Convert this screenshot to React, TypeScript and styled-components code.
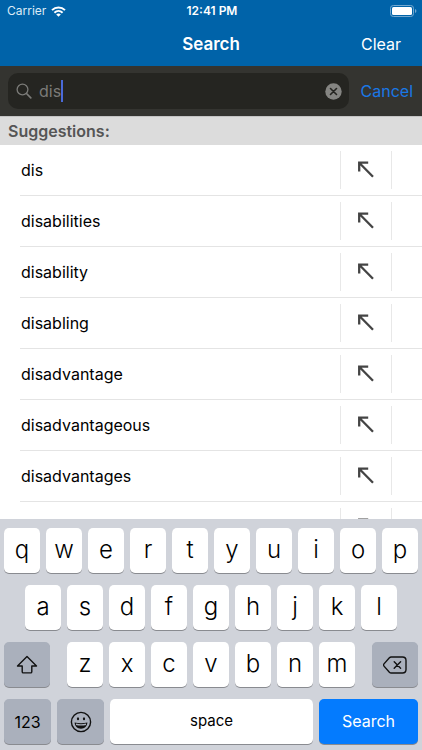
import React, { useState } from "react";
import styled, { createGlobalStyle } from "styled-components";

const GlobalStyle = createGlobalStyle`
  *, *::before, *::after { box-sizing: border-box; }
  body { margin: 0; background: #fff; }
  body, button, input { font-family: Inter, "Liberation Sans", sans-serif; }
  button { margin: 0; padding: 0; border: 0; background: none; color: inherit; cursor: pointer; }
  h1, h2, ul { margin: 0; padding: 0; }
`;

const Screen = styled.div`
  display: flex;
  flex-direction: column;
  height: 100vh;
  overflow: hidden;
  background: #fff;
`;

const StatusBar = styled.div`
  display: grid;
  grid-template-columns: 1fr auto 1fr;
  align-items: center;
  flex: none;
  height: 22px;
  padding: 0 5px 0 7px;
  background: #0063a9;
  color: #fff;
  font-size: 12px;
  line-height: 22px;
`;

const Carrier = styled.span`
  display: flex;
  align-items: center;
  gap: 5px;
  color: #dcebf6;
`;

const Clock = styled.span`
  font-weight: 600;
`;

const BatterySlot = styled.span`
  display: flex;
  justify-content: flex-end;
`;

const NavBar = styled.header`
  display: grid;
  grid-template-columns: 1fr auto 1fr;
  align-items: center;
  flex: none;
  height: 44px;
  padding: 0 21px;
  background: #0063a9;
  color: #fff;
`;

const Title = styled.h1`
  grid-column: 2;
  font-size: 17px;
  font-weight: 600;
  line-height: 22px;
`;

const NavButton = styled.button`
  justify-self: end;
  font-size: 16px;
  line-height: 22px;
`;

const SearchBar = styled.form`
  display: flex;
  align-items: center;
  gap: 12px;
  flex: none;
  height: 50px;
  padding: 0 9px 0 8px;
  background: #343430;
`;

const SearchField = styled.label`
  display: flex;
  align-items: center;
  flex: 1;
  min-width: 0;
  height: 36px;
  padding: 0 7px 0 8px;
  border-radius: 10px;
  background: #252521;
`;

const Query = styled.span`
  display: flex;
  align-items: center;
  flex: 1;
  min-width: 0;
  margin-left: 7px;
`;

const QueryInput = styled.input`
  field-sizing: content;
  min-width: 1px;
  max-width: 100%;
  padding: 0;
  border: 0;
  outline: 0;
  background: transparent;
  color: #7b7b78;
  font-size: 16px;
  line-height: 22px;
`;

const Caret = styled.span`
  width: 2px;
  height: 22px;
  background: #4a6ad8;
`;

const ClearQuery = styled.button`
  display: flex;
`;

const CancelButton = styled.button`
  color: #1a78e6;
  font-size: 16px;
  line-height: 22px;
`;

const SectionTitle = styled.h2`
  flex: none;
  height: 29px;
  padding: 0 8px;
  border-top: 1px solid #c4c4c4;
  background: #dcdcdc;
  color: #555;
  font-size: 16px;
  font-weight: 600;
  line-height: 28px;
`;

const SuggestionList = styled.ul`
  flex: 1;
  min-height: 0;
  overflow: hidden;
  list-style: none;
`;

const SuggestionRow = styled.li`
  display: flex;
  align-items: center;
  height: 51px;
  margin-left: 20px;
  border-bottom: 1px solid #e4e4e4;
`;

const SuggestionText = styled.button`
  flex: 1;
  height: 100%;
  padding-left: 1px;
  color: #000;
  font-size: 16px;
  line-height: 22px;
  text-align: left;
`;

const FillButton = styled.button`
  display: flex;
  align-items: center;
  justify-content: center;
  width: 52px;
  height: 38px;
  margin-right: 30px;
  padding-bottom: 1px;
  border: solid #e8e8e8;
  border-width: 0 1px;
`;

const Keyboard = styled.div`
  display: flex;
  flex-direction: column;
  flex: none;
  gap: 12px;
  padding: 9px 4px 6px;
  background: #d0d3da;
`;

const KeyRow = styled.div<{ $columns: string; $gap?: number; $inset?: number }>`
  display: grid;
  grid-template-columns: ${(p) => p.$columns};
  gap: ${(p) => p.$gap ?? 6}px;
  padding: 0 ${(p) => p.$inset ?? 0}px;
`;

type Tone = "letter" | "system" | "action" | "space";

const keyColors: Record<Tone, string> = {
  letter: "#fff",
  space: "#fff",
  system: "#aab0bc",
  action: "#047bfe",
};

const Key = styled.button<{ $tone?: Tone }>`
  display: flex;
  align-items: center;
  justify-content: center;
  min-width: 0;
  height: 45px;
  padding-bottom: ${(p) => (p.$tone === "system" ? 0 : 2)}px;
  border-radius: 5px;
  background: ${(p) => keyColors[p.$tone ?? "letter"]};
  box-shadow: 0 1px 0 #898b90;
  color: ${(p) => (p.$tone === "action" ? "#fff" : "#000")};
  font-size: ${(p) => (p.$tone ? (p.$tone === "space" ? 15 : 16) : 24)}px;
  font-weight: ${(p) => (p.$tone ? 400 : 300)};
  line-height: 28px;
`;

const WifiIcon = () => (
  <svg width="15" height="11" viewBox="0 0 15 11" fill="none" stroke="#fff" strokeWidth="2" aria-hidden="true">
    <path d="M1 4.1C4.7.5 10.3.5 14 4.1" />
    <path d="M3.4 6.7c2.4-2.2 5.8-2.2 8.2 0" />
    <path d="M7.5 10.7 5.2 8.4c1.3-1.2 3.3-1.2 4.6 0Z" fill="#fff" stroke="none" />
  </svg>
);

const BatteryIcon = () => (
  <svg width="27" height="12" viewBox="0 0 27 12" fill="none" aria-label="Battery full">
    <rect x="0.5" y="0.5" width="23" height="11" rx="2.8" stroke="#73a8d0" />
    <rect x="2" y="2" width="20" height="8" rx="1.5" fill="#fff" />
    <path d="M25 4v4c1.9-.7 1.9-3.3 0-4Z" fill="#73a8d0" />
  </svg>
);

const MagnifierIcon = () => (
  <svg width="16" height="16" viewBox="0 0 16 16" fill="none" stroke="#7b7b78" strokeWidth="1.3" strokeLinecap="round" aria-hidden="true">
    <circle cx="6.5" cy="6.5" r="5.4" />
    <path d="m10.5 10.5 4.3 4.3" strokeWidth="1.7" />
  </svg>
);

const ClearIcon = () => (
  <svg width="17" height="17" viewBox="0 0 17 17" aria-hidden="true">
    <circle cx="8.5" cy="8.5" r="8.2" fill="#858582" />
    <path d="m5.5 5.5 6 6m0-6-6 6" stroke="#252521" strokeWidth="1.6" strokeLinecap="round" />
  </svg>
);

const ArrowIcon = () => (
  <svg width="16" height="17" viewBox="0 0 16 17" fill="none" stroke="#444" strokeWidth="2.3" aria-hidden="true">
    <path d="M1.200 10.500V1.700h9M1.700 2.200l13.300 13.600" />
  </svg>
);

const ShiftIcon = () => (
  <svg width="22" height="20" viewBox="0 0 22 20" fill="none" stroke="#111" strokeWidth="1.4" strokeLinejoin="round" aria-hidden="true">
    <path d="M11 1.6 1.5 11h4.7v5.7c0 .8.4 1.2 1.2 1.2h7.2c.8 0 1.2-.4 1.2-1.2V11h4.7Z" />
  </svg>
);

const BackspaceIcon = () => (
  <svg width="24" height="18" viewBox="0 0 24 18" fill="none" stroke="#111" strokeWidth="1.4" strokeLinejoin="round" strokeLinecap="round" aria-hidden="true">
    <path d="M8.2 1h11.3C21.8 1 23 2.2 23 4.5v9c0 2.3-1.2 3.5-3.5 3.5H8.2c-.8 0-1.3-.3-1.8-.8L1 10.1c-.7-.8-.7-1.4 0-2.2l5.4-6.1C6.9 1.3 7.4 1 8.2 1Z" />
    <path d="m11.2 5.8 6.4 6.4m0-6.4-6.4 6.4" />
  </svg>
);

const SmileIcon = () => (
  <svg width="22" height="22" viewBox="0 0 22 22" fill="none" stroke="#111" aria-hidden="true">
    <circle cx="11" cy="11" r="9.6" strokeWidth="1.4" />
    <ellipse cx="8" cy="7.8" rx="1.1" ry="1.5" fill="#111" stroke="none" />
    <ellipse cx="14" cy="7.8" rx="1.1" ry="1.5" fill="#111" stroke="none" />
    <path d="M4.6 11.6c4.2 1 8.6 1 12.8 0-.1 3.7-2.9 6.2-6.4 6.2s-6.3-2.5-6.4-6.2Z" fill="#111" stroke="none" />
    <path d="M6 13.3c3.2.7 6.8.7 10 0" stroke="#aab0bc" strokeWidth="1.4" />
  </svg>
);

const suggestions = [
  "dis",
  "disabilities",
  "disability",
  "disabling",
  "disadvantage",
  "disadvantageous",
  "disadvantages",
  "",
];

export default function App() {
  const [query, setQuery] = useState("dis");
  const type = (letter: string) => setQuery(query + letter);
  const letters = (row: string) =>
    row.split("").map((letter) => (
      <Key key={letter} type="button" onClick={() => type(letter)}>
        {letter}
      </Key>
    ));

  return (
    <Screen>
      <GlobalStyle />
      <StatusBar>
        <Carrier>
          Carrier <WifiIcon />
        </Carrier>
        <Clock>12:41 PM</Clock>
        <BatterySlot>
          <BatteryIcon />
        </BatterySlot>
      </StatusBar>
      <NavBar>
        <Title>Search</Title>
        <NavButton type="button">Clear</NavButton>
      </NavBar>
      <SearchBar onSubmit={(e) => e.preventDefault()}>
        <SearchField>
          <MagnifierIcon />
          <Query>
            <QueryInput aria-label="Search" value={query} onChange={(e) => setQuery(e.target.value)} />
            <Caret />
          </Query>
          <ClearQuery type="button" aria-label="Clear text" onClick={() => setQuery("")}>
            <ClearIcon />
          </ClearQuery>
        </SearchField>
        <CancelButton type="button">Cancel</CancelButton>
      </SearchBar>
      <SectionTitle>Suggestions:</SectionTitle>
      <SuggestionList>
        {suggestions.map((word) => (
          <SuggestionRow key={word}>
            <SuggestionText type="button">{word}</SuggestionText>
            <FillButton type="button" aria-label={`Use ${word}`} onClick={() => setQuery(word)}>
              <ArrowIcon />
            </FillButton>
          </SuggestionRow>
        ))}
      </SuggestionList>
      <Keyboard>
        <KeyRow $columns="repeat(10, 1fr)">{letters("qwertyuiop")}</KeyRow>
        <KeyRow $columns="repeat(9, 1fr)" $inset={21}>
          {letters("asdfghjkl")}
        </KeyRow>
        <KeyRow $columns="46fr 288fr 46fr" $gap={17}>
          <Key type="button" $tone="system" aria-label="Shift">
            <ShiftIcon />
          </Key>
          <KeyRow $columns="repeat(7, 1fr)">{letters("zxcvbnm")}</KeyRow>
          <Key type="button" $tone="system" aria-label="Delete" onClick={() => setQuery(query.slice(0, -1))}>
            <BackspaceIcon />
          </Key>
        </KeyRow>
        <KeyRow $columns="47fr 47fr 203fr 99fr">
          <Key type="button" $tone="system">123</Key>
          <Key type="button" $tone="system" aria-label="Emoji">
            <SmileIcon />
          </Key>
          <Key type="button" $tone="space" onClick={() => type(" ")}>space</Key>
          <Key type="button" $tone="action">Search</Key>
        </KeyRow>
      </Keyboard>
    </Screen>
  );
}
